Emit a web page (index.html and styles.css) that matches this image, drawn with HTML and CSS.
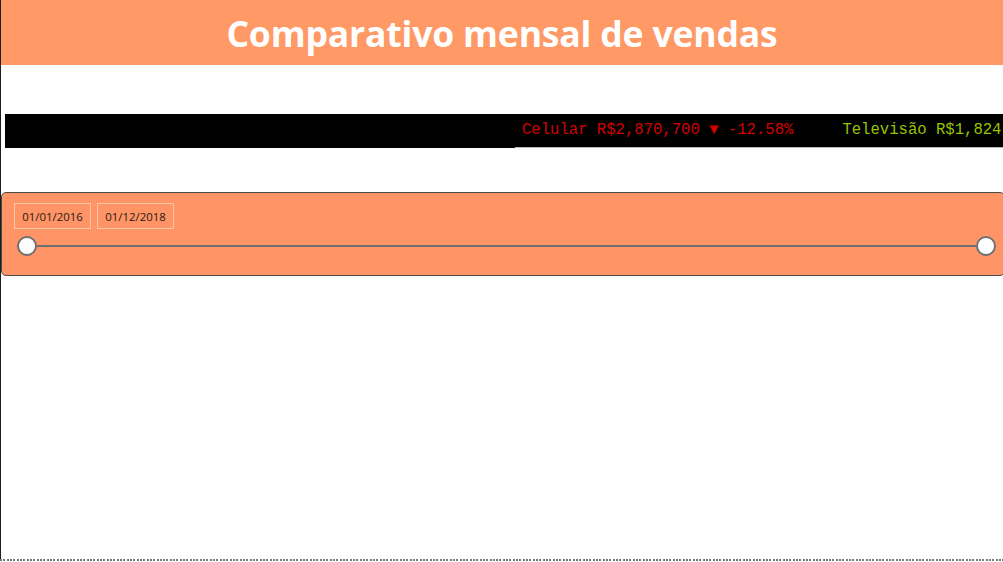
FILE: index.html
```html
<!DOCTYPE html>
<html lang="pt">
<head>
<meta charset="utf-8">
<title>Comparativo mensal de vendas</title>
<link rel="stylesheet" href="styles.css">
</head>
<body>
<div class="page">
  <header class="header">
    <h1 class="title">Comparativo mensal de vendas</h1>
  </header>
  <div class="ticker">
    <div class="ticker-track">
      <span class="tick tick-down">Celular R$2,870,700 ▼ -12.58%</span>
      <span class="tick tick-up">Televisão R$1,824</span>
    </div>
  </div>
  <div class="ticker-rule"></div>
  <section class="slicer">
    <div class="dates">
      <span class="date-box">01/01/2016</span>
      <span class="date-box">01/12/2018</span>
    </div>
    <div class="slider">
      <span class="handle"></span>
      <span class="track"></span>
      <span class="handle"></span>
    </div>
  </section>
  <div class="bottom-rule"></div>
</div>
</body>
</html>
```
FILE: styles.css
```css
* { box-sizing: border-box; }
html, body { margin: 0; padding: 0; background: #ffffff; }
body { width: 1003px; height: 562px; overflow: hidden; }

.page {
  height: 561px;
  border-left: 1px solid #1e1e1e;
  display: flex;
  flex-direction: column;
}

.header {
  height: 65px;
  background: #ff9966;
  display: flex;
  align-items: center;
  justify-content: center;
  flex-shrink: 0;
}
.title {
  margin: 0;
  color: #ffffff;
  font-family: "Open Sans", "Noto Sans", sans-serif;
  font-weight: 700;
  font-size: 35.6px;
  line-height: 64px;
  letter-spacing: -0.2px;
}

.ticker {
  margin-top: 49px;
  margin-left: 4px;
  height: 33px;
  background: #000000;
  overflow: hidden;
  flex-shrink: 0;
}
.ticker-track {
  display: flex;
  gap: 49px;
  padding-left: 517px;
  white-space: nowrap;
  font-family: "Liberation Mono", "DejaVu Sans Mono", monospace;
  font-size: 15.6px;
  line-height: 33px;
}
.tick-down { color: #d40000; }
.tick-up { color: #99c300; }

.ticker-rule {
  margin-left: 4px;
  height: 1px;
  background: linear-gradient(90deg, #000 0 510px, #b8b8b8 510px 100%);
  flex-shrink: 0;
}

.slicer {
  margin-top: 44px;
  margin-right: -2px;
  height: 84px;
  background: #ff9566;
  border: 1px solid #4a4a4a;
  border-radius: 5px;
  padding: 10px 8px 0 12px;
  flex-shrink: 0;
}
.dates {
  display: flex;
  gap: 6px;
}
.date-box {
  width: 77px;
  height: 26px;
  border: 1px solid rgba(255, 255, 255, 0.45);
  font-family: "Open Sans", "Noto Sans", sans-serif;
  font-size: 11.4px;
  color: #2a1a14;
  display: flex;
  align-items: center;
  justify-content: center;
}
.slider {
  margin-top: 7px;
  margin-left: 3px;
  display: flex;
  align-items: center;
  width: 979px;
}
.handle {
  width: 20px;
  height: 20px;
  border-radius: 50%;
  background: #ffffff;
  border: 2px solid #707070;
  flex-shrink: 0;
}
.track {
  flex: 1;
  height: 2px;
  background: #707070;
}

.bottom-rule {
  margin-top: auto;
  height: 2px;
  background: repeating-linear-gradient(90deg, #7a7a7a 0 2px, transparent 2px 3.33px);
  margin-left: -1px;
  flex-shrink: 0;
}
```
